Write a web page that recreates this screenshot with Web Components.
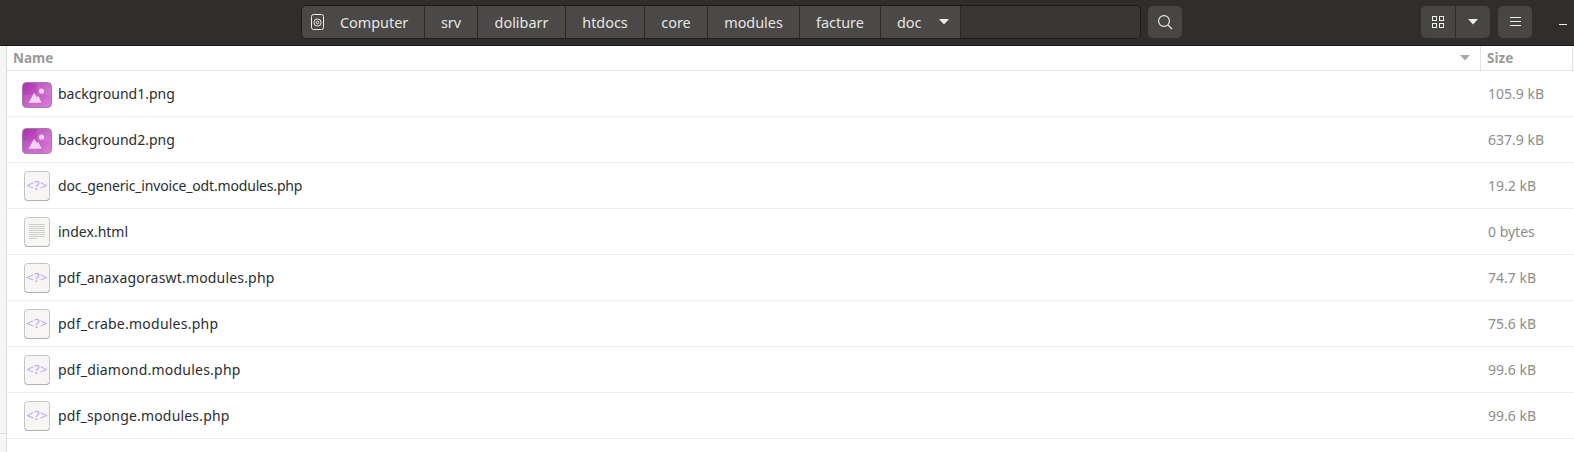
<!DOCTYPE html>
<html lang="en">
<head>
<meta charset="utf-8">
<title>Files</title>
<style>
    html, body { margin: 0; height: 100%; background: #fff; overflow: hidden; }
    body { font-family: "Noto Sans", "Open Sans", sans-serif; display: flex; flex-direction: column; width: 1574px; height: 452px; }
</style>
</head>
<body>
<app-header>
    <path-bar>
        <path-seg w="123" home>Computer</path-seg>
        <path-seg w="53">srv</path-seg>
        <path-seg w="88">dolibarr</path-seg>
        <path-seg w="79">htdocs</path-seg>
        <path-seg w="63">core</path-seg>
        <path-seg w="92">modules</path-seg>
        <path-seg w="81">facture</path-seg>
        <path-seg w="80" more>doc</path-seg>
    </path-bar>
</app-header>
<file-view>
    <file-row icon="image" size="105.9 kB">background1.png</file-row>
    <file-row icon="image" size="637.9 kB">background2.png</file-row>
    <file-row icon="php" size="19.2 kB" track="-.17">doc_generic_invoice_odt.modules.php</file-row>
    <file-row icon="text" size="0 bytes">index.html</file-row>
    <file-row icon="php" size="74.7 kB" track=".18">pdf_anaxagoraswt.modules.php</file-row>
    <file-row icon="php" size="75.6 kB" track=".24">pdf_crabe.modules.php</file-row>
    <file-row icon="php" size="99.6 kB" track=".22">pdf_diamond.modules.php</file-row>
    <file-row icon="php" size="99.6 kB" track=".18">pdf_sponge.modules.php</file-row>
</file-view>
<script>
// Header bar with the path, search, view and menu buttons.
class AppHeader extends HTMLElement {
    constructor() {
        super();
        const shadowRoot = this.attachShadow({ mode: 'open' });
        shadowRoot.innerHTML = `
<style>
    :host {
        display: flex;
        align-items: flex-start;
        flex: none;
        height: 46px;
        box-sizing: border-box;
        padding: 5px 0 0 301px;
        background: #2f2e2d;
        border-bottom: 1px solid #1a1918;
    }
    .btn {
        box-sizing: border-box;
        height: 32px;
        margin-top: 1px;
        display: flex;
        align-items: center;
        justify-content: center;
        background: #474644;
        border-radius: 5px;
    }
    .search { width: 34px; margin-left: 7px; }
    .view { width: 34px; margin-left: 239px; border-radius: 5px 0 0 5px; }
    .arrow { width: 35px; border-left: 1px solid #2f2e2d; border-radius: 0 5px 5px 0; }
    .menu { width: 34px; margin-left: 8px; }
    .min { width: 8px; height: 1px; background: #f2f2f2; margin: 19px 0 0 27px; }
</style>
<slot></slot>
<div class="btn search"><svg width="16" height="16" viewBox="0 0 16 16" fill="none" stroke="#eeeeec" stroke-width="1.1"><circle cx="7" cy="7" r="5.4"/><path d="M11 11l4 4"/></svg></div>
<div class="btn view"><svg width="12" height="12" viewBox="0 0 12 12" fill="none" stroke="#eeeeec"><rect x=".5" y=".5" width="4" height="4"/><rect x="7.5" y=".5" width="4" height="4"/><rect x=".5" y="7.5" width="4" height="4"/><rect x="7.5" y="7.5" width="4" height="4"/></svg></div>
<div class="btn arrow"><svg width="10" height="6" viewBox="0 0 10 6"><path d="M0 0h10L5 5.5z" fill="#eeeeec"/></svg></div>
<div class="btn menu"><svg width="11" height="10" viewBox="0 0 11 10" stroke="#eeeeec"><path d="M0 .5h11M0 4.5h11M0 8.5h11" fill="none"/></svg></div>
<div class="min"></div>`;
    }
}

// The location bar, a rounded dark box holding the segments.
class PathBar extends HTMLElement {
    constructor() {
        super();
        const shadowRoot = this.attachShadow({ mode: 'open' });
        shadowRoot.innerHTML = `
<style>
    :host {
        display: flex;
        box-sizing: border-box;
        width: 840px;
        height: 34px;
        background: #383735;
        border: 1px solid #1c1b1a;
        border-radius: 5px;
        overflow: hidden;
    }
</style>
<slot></slot>`;
    }
}

class PathSeg extends HTMLElement {
    constructor() {
        super();
        const shadowRoot = this.attachShadow({ mode: 'open' });
        shadowRoot.innerHTML = `
<style>
    :host {
        display: flex;
        align-items: center;
        justify-content: center;
        box-sizing: border-box;
        flex: none;
        height: 32px;
        background: #4a4947;
        border-right: 1px solid #2a2928;
        color: #e6e6e4;
        font-size: 14.4px;
    }
    :host([home]) { justify-content: flex-start; padding-left: 9px; }
    :host([more]) { justify-content: flex-start; padding-left: 16px; }
    .home { display: block; margin-right: 16px; }
    .more { display: block; margin-left: 18px; }
</style>
<span id="before"></span><slot></slot><span id="after"></span>`;
    }
    connectedCallback() {
        this.style.width = this.getAttribute('w') + 'px';
        if (this.hasAttribute('home')) {
            this.shadowRoot.getElementById('before').innerHTML = `<svg class="home" width="13" height="16" viewBox="0 0 13 16" fill="none" stroke="#eeeeec"><rect x=".5" y=".5" width="12" height="15" rx="2"/><circle cx="6.5" cy="8.5" r="3.6"/><circle cx="6.5" cy="8.5" r="1.3"/></svg>`;
        }
        if (this.hasAttribute('more')) {
            this.shadowRoot.getElementById('after').innerHTML = `<svg class="more" width="10" height="6" viewBox="0 0 10 6"><path d="M0 0h10L5 5.5z" fill="#eeeeec"/></svg>`;
        }
    }
}

// List area: thin sidebar edge, column titles and the rows.
class FileView extends HTMLElement {
    constructor() {
        super();
        const shadowRoot = this.attachShadow({ mode: 'open' });
        shadowRoot.innerHTML = `
<style>
    :host { display: flex; flex: 1; min-height: 0; background: #fff; }
    .side {
        flex: none;
        width: 6px;
        background: #f6f6f5;
        border-right: 1px solid #dcdcda;
    }
    .side div { height: 387px; border-bottom: 1px solid #dcdcda; }
    .main { flex: 1; min-width: 0; }
    .head {
        display: grid;
        grid-template-columns: 1fr 92px 1px 1px;
        height: 25px;
        box-sizing: border-box;
        border-bottom: 1px solid #e2e2e0;
        color: #9a9a98;
        font-size: 13.5px;
        font-weight: 700;
    }
    .name { display: flex; align-items: center; justify-content: space-between; padding: 0 10px 0 6px; }
    .size { display: flex; align-items: center; padding-left: 6px; border-left: 1px solid #e2e2e0; }
    .end { background: #e2e2e0; }
</style>
<div class="side"><div></div></div>
<div class="main">
    <div class="head">
        <div class="name">Name<svg width="10" height="6" viewBox="0 0 10 6"><path d="M0 0h10L5 5.5z" fill="#a8a8a6"/></svg></div>
        <div class="size">Size</div>
        <div class="end"></div>
        <div></div>
    </div>
    <slot></slot>
</div>`;
    }
}

const PAGE_BOX = `
    <rect x=".5" y=".5" width="25" height="29" rx="3" fill="#f7f6f5" stroke="#c4c4c2"/>
    <path d="M1 27.5a2.5 2 0 0 0 2.5 2h19a2.5 2 0 0 0 2.5-2" fill="none" stroke="#b0b0ae"/>`;

const PHP_ICON = `
<svg width="26" height="30" viewBox="0 0 26 30">${PAGE_BOX}
    <text x="13" y="19" text-anchor="middle" font-family="Noto Sans, sans-serif" font-size="13" letter-spacing=".4" fill="#b3a2f2">&lt;?&gt;</text>
</svg>`;

const TEXT_ICON = `
<svg width="26" height="30" viewBox="0 0 26 30">${PAGE_BOX}
    <path d="M5 7.5h16M5 9.5h16M5 11.5h16M5 13.5h16M5 15.5h16M5 17.5h16M5 19.5h16M5 21.5h8" stroke="#cfcfcd" fill="none"/>
</svg>`;

const IMAGE_ICON = `
<svg width="30" height="26" viewBox="0 0 30 26">
    <defs>
        <linearGradient id="g" x1="0" y1="0" x2="1" y2="1">
            <stop offset="0" stop-color="#a82fad"/>
            <stop offset="1" stop-color="#df82da"/>
        </linearGradient>
    </defs>
    <rect x=".5" y=".5" width="29" height="25" rx="4" fill="url(#g)" stroke="#a77aa9"/>
    <path d="M15 1H25a4 4 0 0 1 4 4v8H15z" fill="#fff" opacity=".1"/>
    <path d="M1 13h14v12H5a4 4 0 0 1-4-4z" fill="#fff" opacity=".07"/>
    <circle cx="19.5" cy="9" r="2.6" fill="#f2d4f2"/>
    <path d="M6.7 20.8l5.4-10 3 4.5 1.2-1.5 3.3 7z" fill="#f2d4f2"/>
</svg>`;

// One row of the list. Attributes: icon (image, php, text), size and track (letter spacing).
class FileRow extends HTMLElement {
    constructor() {
        super();
        const shadowRoot = this.attachShadow({ mode: 'open' });
        shadowRoot.innerHTML = `
<style>
    :host {
        display: grid;
        grid-template-columns: 44px 1fr 86px;
        align-items: center;
        height: 46px;
        box-sizing: border-box;
        padding-left: 7px;
        border-bottom: 1px solid #eeeeec;
        font-size: 14px;
        color: #2a2e30;
    }
    .ic { display: flex; margin-left: 10px; }
    :host([icon="image"]) .ic { margin: 3px 0 0 8px; }
    .sz { color: #8d8d8b; font-size: 14px; }
</style>
<div class="ic"></div>
<div id="label"><slot></slot></div>
<div class="sz"></div>`;
    }
    connectedCallback() {
        const icons = { image: IMAGE_ICON, php: PHP_ICON, text: TEXT_ICON };
        this.shadowRoot.querySelector('.ic').innerHTML = icons[this.getAttribute('icon')];
        this.shadowRoot.querySelector('.sz').textContent = this.getAttribute('size');
        const track = this.getAttribute('track');
        if (track) {
            this.shadowRoot.getElementById('label').style.letterSpacing = track + 'px';
        }
    }
}

customElements.define('app-header', AppHeader);
customElements.define('path-bar', PathBar);
customElements.define('path-seg', PathSeg);
customElements.define('file-view', FileView);
customElements.define('file-row', FileRow);
</script>
</body>
</html>
